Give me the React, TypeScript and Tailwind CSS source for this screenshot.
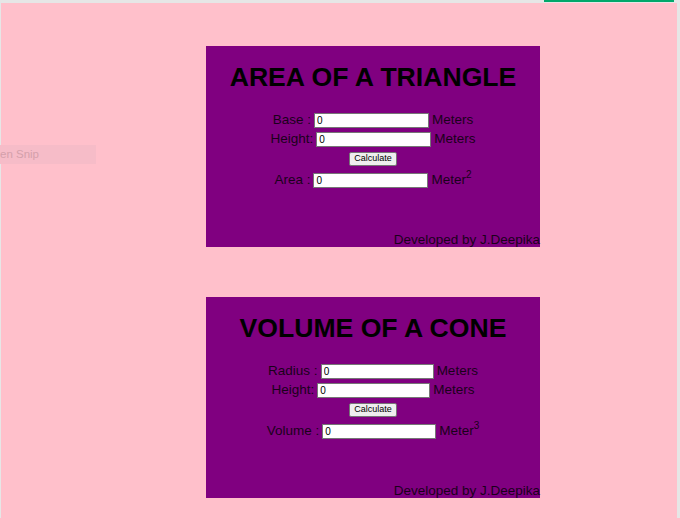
import React from 'react';

const font = { fontFamily: '"Liberation Sans", Arial, sans-serif' };

const Field = ({ label, unit, sup, inputW = 'w-[115px]' }: { label: string; unit: string; sup?: string; inputW?: string }) => (
  <div className="flex items-center justify-center h-[19px] gap-[3px] text-[13.5px] text-[#1a001a]">
    <span>{label}</span>
    <input
      defaultValue="0"
      className={`${inputW} h-[15px] bg-white border border-[#767676] text-[10px] text-black px-[2px] leading-none outline-none`}
      style={font}
    />
    <span className="relative">
      {unit}
      {sup && <span className="text-[10px] leading-none relative -top-[6px]">{sup}</span>}
    </span>
  </div>
);

const CalcButton = () => (
  <div className="flex justify-center h-[19px] items-center">
    <button
      className="h-[14px] px-[4px] bg-[#efefef] border border-[#767676] rounded-[2px] text-[9px] leading-none text-black"
      style={font}
    >
      Calculate
    </button>
  </div>
);

const Card = ({ title, rows, result }: { title: string; rows: React.ReactNode; result: React.ReactNode }) => (
  <div className="w-[334px] h-[201px] bg-[#800080] flex flex-col">
    <h1 className="text-center font-bold text-[26.6px] leading-[32px] text-black mt-[15px] mb-[18px]">{title}</h1>
    {rows}
    <CalcButton />
    <div className="mt-[3px]">{result}</div>
    <div className="mt-auto text-right text-[13.5px] leading-[15px] text-[#1a001a]">Developed by J.Deepika</div>
  </div>
);

export default function App() {
  return (
    <div className="w-[680px] h-[518px] bg-[#e6e6e6] relative overflow-hidden" style={font}>
      <div className="absolute top-0 left-[544px] w-[130px] h-[2px] bg-[#00a86b]" />
      <div className="ml-[1px] mt-[3px] w-[676px] h-[515px] bg-[#ffc0cb] relative flex flex-col pl-[205px] pt-[43px] gap-[50px]">
        <Card
          title="AREA OF A TRIANGLE"
          rows={
            <>
              <Field label="Base :" unit="Meters" />
              <Field label="Height:" unit="Meters" />
            </>
          }
          result={<Field label="Area :" unit="Meter" sup="2" />}
        />
        <Card
          title="VOLUME OF A CONE"
          rows={
            <>
              <Field label="Radius :" unit="Meters" inputW="w-[113px]" />
              <Field label="Height:" unit="Meters" inputW="w-[113px]" />
            </>
          }
          result={<Field label="Volume :" unit="Meter" sup="3" inputW="w-[114px]" />}
        />
        <div className="absolute -left-[1px] top-[142px] w-[96px] h-[19px] bg-[#f6bcc8] text-[11.5px] leading-[19px] text-[#d4a0ab] whitespace-nowrap">
          en Snip
        </div>
      </div>
    </div>
  );
}
